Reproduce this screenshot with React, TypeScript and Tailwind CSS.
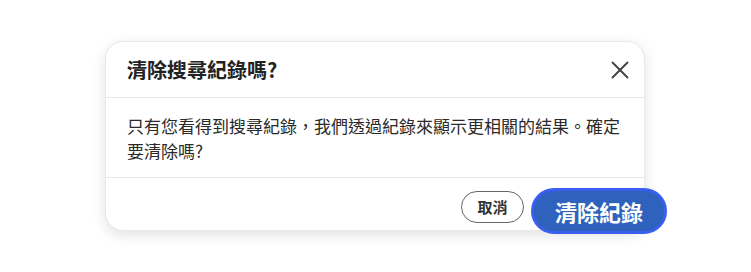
import { X } from 'lucide-react';

const font = '"Noto Sans CJK TC", "Noto Sans", "Liberation Sans", sans-serif';

export default function App() {
  return (
    <div className="w-[751px] h-[272px] bg-white pt-[41px] pl-[105px]" style={{ fontFamily: font }}>
      {/* Dialog card */}
      <div className="w-[540px] h-[190px] rounded-[18px] border border-[#e8e8e8] bg-white shadow-[0_4px_14px_rgba(0,0,0,0.12)] flex flex-col">
        {/* Header */}
        <div className="shrink-0 h-[56px] flex items-center justify-between pl-[21px] pr-[9px] border-b border-[#e6e6e6]">
          <h2 className="text-[20px] font-bold text-[#222] leading-none pt-[1px]">清除搜尋紀錄嗎?</h2>
          <button className="w-[30px] h-[30px] flex items-center justify-center text-[#444]" aria-label="關閉">
            <X size={30} strokeWidth={1.5} />
          </button>
        </div>

        {/* Body */}
        <div className="shrink-0 h-[80px] pl-[21px] pr-[20px] py-[15px] border-b border-[#e6e6e6]">
          <p className="text-[17px] leading-[25px] text-[#2a2a2a]">
            只有您看得到搜尋紀錄，我們透過紀錄來顯示更相關的結果。確定要清除嗎?
          </p>
        </div>

        {/* Footer */}
        <div className="shrink-0 h-[52px] flex items-center justify-end gap-[7px]">
          <button className="mt-[6px] w-[63px] h-[32px] rounded-full border border-[#666] text-[15px] font-bold text-[#333] flex items-center justify-center">
            取消
          </button>
          <button className="mt-[14px] -mr-[23px] w-[136px] h-[46px] rounded-full border-[3px] border-[#3a5ef0] bg-[#2e62bd] text-white text-[22px] font-bold flex items-center justify-center">
            清除紀錄
          </button>
        </div>
      </div>
    </div>
  );
}
